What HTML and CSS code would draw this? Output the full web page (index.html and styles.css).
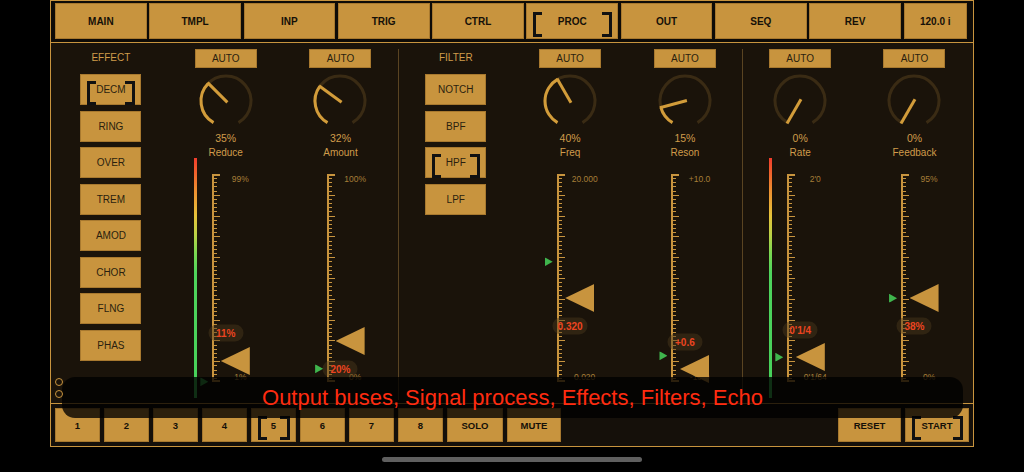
FILE: index.html
```html
<!DOCTYPE html>
<html>
<head>
<meta charset="utf-8">
<link rel="stylesheet" href="styles.css">
</head>
<body>
<div class="panel">
  <nav class="topbar">
    <div class="btn">MAIN</div>
    <div class="btn">TMPL</div>
    <div class="btn">INP</div>
    <div class="btn">TRIG</div>
    <div class="btn">CTRL</div>
    <div class="btn sel">PROC</div>
    <div class="btn">OUT</div>
    <div class="btn">SEQ</div>
    <div class="btn">REV</div>
    <div class="btn">120.0 i</div>
  </nav>
  <main class="content">
    <section class="col">
      <div class="col-title">EFFECT</div>
      <div class="list">
        <div class="lbtn sel">DECM</div>
        <div class="lbtn">RING</div>
        <div class="lbtn">OVER</div>
        <div class="lbtn">TREM</div>
        <div class="lbtn">AMOD</div>
        <div class="lbtn">CHOR</div>
        <div class="lbtn">FLNG</div>
        <div class="lbtn">PHAS</div>
      </div>
    </section>

    <section class="col">
      <div class="auto">AUTO</div>
      <svg class="knob" viewBox="0 0 60 60"><path class="trk" d="M17.5 51.65A25 25 0 1 1 42.5 51.65"/><path class="act" d="M17.5 51.65A25 25 0 0 1 12.32 12.32"/><line class="ptr" x1="31.4" y1="31.4" x2="11.6" y2="11.6"/></svg>
      <div class="val">35%</div>
      <div class="name">Reduce</div>
      <div class="slider">
        <div class="meter"></div>
        <div class="ruler"></div>
        <span class="rl top">99%</span>
        <span class="rl bot">1%</span>
        <span class="pill" style="top:163px">11%</span>
        <span class="mark" style="top:211.7px"></span>
        <span class="src" style="top:191px"></span>
      </div>
    </section>

    <section class="col">
      <div class="auto">AUTO</div>
      <svg class="knob" viewBox="0 0 60 60"><path class="trk" d="M17.5 51.65A25 25 0 1 1 42.5 51.65"/><path class="act" d="M17.5 51.65A25 25 0 0 1 9.77 15.3"/><line class="ptr" x1="31.6" y1="31.2" x2="9" y2="14.7"/></svg>
      <div class="val">32%</div>
      <div class="name">Amount</div>
      <div class="slider">
        <div class="ruler"></div>
        <span class="rl top">100%</span>
        <span class="rl bot">0%</span>
        <span class="pill" style="top:198.7px">20%</span>
        <span class="mark" style="top:198.7px"></span>
        <span class="src" style="top:171px"></span>
      </div>
    </section>

    <section class="col sep">
      <div class="col-title">FILTER</div>
      <div class="list">
        <div class="lbtn">NOTCH</div>
        <div class="lbtn">BPF</div>
        <div class="lbtn sel">HPF</div>
        <div class="lbtn">LPF</div>
      </div>
    </section>

    <section class="col">
      <div class="auto">AUTO</div>
      <svg class="knob" viewBox="0 0 60 60"><path class="trk" d="M17.5 51.65A25 25 0 1 1 42.5 51.65"/><path class="act" d="M17.5 51.65A25 25 0 0 1 17.5 8.35"/><line class="ptr" x1="31" y1="31.7" x2="17" y2="7.5"/></svg>
      <div class="val">40%</div>
      <div class="name">Freq</div>
      <div class="slider">
        <div class="ruler"></div>
        <span class="rl top">20.000</span>
        <span class="rl bot">0.020</span>
        <span class="pill" style="top:156px">0.320</span>
        <span class="mark" style="top:91.7px"></span>
        <span class="src" style="top:128px"></span>
      </div>
    </section>

    <section class="col">
      <div class="auto">AUTO</div>
      <svg class="knob" viewBox="0 0 60 60"><path class="trk" d="M17.5 51.65A25 25 0 1 1 42.5 51.65"/><path class="act" d="M17.5 51.65A25 25 0 0 1 5.85 36.47"/><line class="ptr" x1="31.9" y1="29.5" x2="4.9" y2="36.7"/></svg>
      <div class="val">15%</div>
      <div class="name">Reson</div>
      <div class="slider">
        <div class="ruler"></div>
        <span class="rl top">+10.0</span>
        <span class="rl bot">-10.0</span>
        <span class="pill" style="top:171.7px">+0.6</span>
        <span class="mark" style="top:185.7px"></span>
        <span class="src" style="top:199px"></span>
      </div>
    </section>

    <section class="col sep">
      <div class="auto">AUTO</div>
      <svg class="knob" viewBox="0 0 60 60"><path class="trk" d="M17.5 51.65A25 25 0 1 1 42.5 51.65"/><line class="ptr" x1="31" y1="28.3" x2="17" y2="52.5"/></svg>
      <div class="val">0%</div>
      <div class="name">Rate</div>
      <div class="slider">
        <div class="meter"></div>
        <div class="ruler"></div>
        <span class="rl top">2'0</span>
        <span class="rl bot">0'1/64</span>
        <span class="pill" style="top:160px">0'1/4</span>
        <span class="mark" style="top:187.3px"></span>
        <span class="src" style="top:187px"></span>
      </div>
    </section>

    <section class="col">
      <div class="auto">AUTO</div>
      <svg class="knob" viewBox="0 0 60 60"><path class="trk" d="M17.5 51.65A25 25 0 1 1 42.5 51.65"/><line class="ptr" x1="31" y1="28.3" x2="17" y2="52.5"/></svg>
      <div class="val">0%</div>
      <div class="name">Feedback</div>
      <div class="slider">
        <div class="ruler"></div>
        <span class="rl top">95%</span>
        <span class="rl bot">0%</span>
        <span class="pill" style="top:156px">38%</span>
        <span class="mark" style="top:128.3px"></span>
        <span class="src" style="top:128px"></span>
      </div>
    </section>
  </main>
  <footer class="bottombar">
    <div class="bbtn">1</div>
    <div class="bbtn">2</div>
    <div class="bbtn">3</div>
    <div class="bbtn">4</div>
    <div class="bbtn sel">5</div>
    <div class="bbtn">6</div>
    <div class="bbtn">7</div>
    <div class="bbtn">8</div>
    <div class="bbtn solo">SOLO</div>
    <div class="bbtn mute">MUTE</div>
    <div class="spacer"></div>
    <div class="bbtn reset">RESET</div>
    <div class="bbtn sel start">START</div>
  </footer>
</div>
<div class="toast">Output buses, Signal process, Effects, Filters, Echo</div>
<div class="dots"><i></i><i></i></div>
<div class="home"></div>
</body>
</html>
```
FILE: styles.css
```css
* { box-sizing: border-box; }
html, body { margin: 0; background: #000; }
body {
  width: 1024px;
  height: 472px;
  overflow: hidden;
  position: relative;
  font-family: "Liberation Sans", Arial, sans-serif;
}
.panel {
  margin-left: 50px;
  width: 924px;
  height: 447px;
  border: 1px solid #c8943e;
  background: #1a130a;
  display: flex;
  flex-direction: column;
}
.topbar {
  height: 42px;
  flex: none;
  background: #0e0b07;
  border-bottom: 1px solid #c8943e;
  padding: 2px 0 0 4px;
  display: grid;
  grid-template-columns: repeat(9, 91.7px) 63.5px;
  column-gap: 2.6px;
  align-items: start;
}
.btn {
  height: 36px;
  background: #c8943e;
  color: #151008;
  font-weight: bold;
  font-size: 10px;
  display: flex;
  align-items: center;
  justify-content: center;
  position: relative;
  box-shadow: inset 0 0 0 1px #a8792f;
}
.sel::before, .sel::after {
  content: "";
  position: absolute;
  top: 50%;
  width: 6.5px;
  height: 18px;
  margin-top: -9px;
  border: 3px solid #111;
}
.sel::before { left: 6.5px; border-right: none; }
.sel::after { right: 6.5px; border-left: none; }
.btn.sel::before, .btn.sel::after { height: 19px; margin-top: -9.5px; }

.content {
  flex: 1;
  display: grid;
  grid-template-columns: repeat(8, 114.8px);
  padding-left: 2.5px;
  min-height: 0;
}
.col {
  margin: 6px 0 3px;
  display: flex;
  flex-direction: column;
  align-items: center;
  min-height: 0;
}
.col.sep { border-left: 1px solid #5a4422; }
.col-title {
  height: 18px;
  line-height: 18px;
  font-size: 10px;
  color: #d09c4a;
}
.list {
  margin-top: 7px;
  display: flex;
  flex-direction: column;
  gap: 5.5px;
}
.lbtn {
  width: 61px;
  height: 31px;
  background: #c8943e;
  color: #2a1f0f;
  font-size: 10px;
  display: flex;
  align-items: center;
  justify-content: center;
  position: relative;
  box-shadow: inset 0 0 0 1px #a8792f;
}
.auto {
  width: 62px;
  height: 19px;
  flex: none;
  background: #c8943e;
  color: #2a1f0f;
  font-size: 10px;
  display: flex;
  align-items: center;
  justify-content: center;
  box-shadow: inset 0 0 0 1px #a8792f;
}
.knob {
  width: 60px;
  height: 60px;
  margin-top: 3px;
  display: block;
  flex: none;
}
.knob .trk { fill: none; stroke: #3a2b14; stroke-width: 3; }
.knob .act, .knob .ptr { fill: none; stroke: #d29c3a; stroke-width: 3; }
.val {
  font-size: 10.5px;
  line-height: 14px;
  color: #d09c4a;
}
.name {
  font-size: 10px;
  line-height: 14px;
  margin-top: 1px;
  color: #d09c4a;
}
.slider {
  position: relative;
  align-self: stretch;
  flex: none;
  margin-top: 10px;
  height: 216px;
  padding: 4px 0 0 44px;
}
.meter {
  position: absolute;
  left: 26px;
  top: -12px;
  width: 2.5px;
  height: 240px;
  background: linear-gradient(to bottom, #f03c2c 0%, #f0602c 6%, #ee8c30 13%, #e6c23a 24%, #bcd246 32%, #78d852 40%, #4ed45c 48%, #46d05a 100%);
}
.ruler {
  width: 8px;
  height: 208px;
  border-left: 2px solid #c8943e;
  background:
    linear-gradient(#c8943e, #c8943e) left top / 6px 2px no-repeat,
    linear-gradient(#c8943e, #c8943e) left bottom / 6px 2px no-repeat,
    repeating-linear-gradient(to bottom, #c8943e 0 1px, transparent 1px 20.8px) left top / 6px 100% no-repeat,
    repeating-linear-gradient(to bottom, #c8943e 0 1px, transparent 1px 4.16px) left top / 3px 100% no-repeat;
}
.rl {
  position: absolute;
  left: 72px;
  font-size: 8.5px;
  line-height: 10px;
  color: #a67e38;
  transform: translate(-50%, -50%);
  white-space: nowrap;
}
.rl.top { top: 9px; }
.rl.bot { top: 207px; }
.pill {
  position: absolute;
  left: 50%;
  width: 35px;
  height: 17px;
  border-radius: 8.5px;
  transform: translate(-50%, -50%);
  background: rgba(75, 57, 28, 0.45);
  color: #ec4420;
  font-weight: bold;
  font-size: 10px;
  line-height: 17px;
  text-align: center;
  white-space: nowrap;
}
.mark {
  position: absolute;
  left: 32px;
  width: 8px;
  height: 9px;
  transform: translateY(-50%);
  background: #3fb54d;
  clip-path: polygon(0 0, 100% 50%, 0 100%);
}
.src {
  position: absolute;
  left: 52.5px;
  width: 29px;
  height: 28px;
  transform: translateY(-50%);
  background: #c8943e;
  clip-path: polygon(0 50%, 100% 0, 100% 100%);
}

.bottombar {
  height: 43px;
  flex: none;
  border-top: 1px solid #c8943e;
  background: #15100a;
  display: flex;
  align-items: flex-start;
  gap: 4px;
  padding: 4px 4px 0 4px;
}
.bbtn {
  width: 45px;
  height: 34px;
  flex: none;
  background: #c8943e;
  color: #151008;
  font-weight: bold;
  font-size: 9.5px;
  display: flex;
  align-items: center;
  justify-content: center;
  position: relative;
  box-shadow: inset 0 0 0 1px #a8792f;
}
.bbtn.solo { width: 56px; }
.bbtn.mute { width: 54px; }
.bbtn.reset { width: 63px; }
.bbtn.start { width: 64px; }
.spacer { flex: 1; }

.toast {
  position: absolute;
  left: 62px;
  top: 377px;
  width: 901px;
  height: 41px;
  border-radius: 13px;
  background: rgba(0, 0, 0, 0.78);
  color: #ff2b10;
  font-size: 22px;
  display: flex;
  align-items: center;
  justify-content: center;
  white-space: nowrap;
}
.dots {
  position: absolute;
  left: 55px;
  top: 378px;
  display: flex;
  flex-direction: column;
  gap: 4px;
}
.dots i {
  display: block;
  width: 8px;
  height: 8px;
  border: 1.5px solid #c8943e;
  border-radius: 50%;
}
.home {
  position: absolute;
  left: 382px;
  top: 457px;
  width: 260px;
  height: 5px;
  border-radius: 3px;
  background: #5f5f5f;
}
```
